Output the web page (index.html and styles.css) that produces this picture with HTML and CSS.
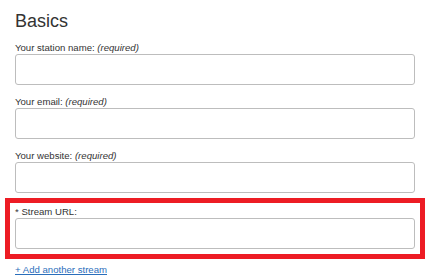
FILE: index.html
```html
<!DOCTYPE html>
<html lang="en">
<head>
    <meta charset="UTF-8">
    <meta name="viewport" content="width=device-width, initial-scale=1.0">
    <title>Basics</title>
    <link rel="stylesheet" href="styles.css">
</head>
<body>
    <form class="basics">
        <h1>Basics</h1>

        <div class="field">
            <label for="stationName">Your station name: <em>(required)</em></label>
            <input type="text" id="stationName" name="stationName">
        </div>

        <div class="field">
            <label for="email">Your email: <em>(required)</em></label>
            <input type="text" id="email" name="email">
        </div>

        <div class="field">
            <label for="website">Your website: <em>(required)</em></label>
            <input type="text" id="website" name="website">
        </div>

        <!-- highlighted stream block -->
        <div class="stream">
            <label for="streamUrl">* Stream URL:</label>
            <input type="text" id="streamUrl" name="streamUrl">
        </div>

        <a class="add-stream" href="#">+ Add another stream</a>
    </form>
</body>
</html>
```

FILE: styles.css
```css
body {
    font-family: "Liberation Sans", Arial, sans-serif;
    margin: 0;
    padding: 0 15px;
    background-color: #fff;
    color: #333;
}
h1 {
    font-size: 18px;
    font-weight: normal;
    line-height: 22px;
    margin: 10px 0 9px;
    color: #333;
}
label {
    display: block;
    font-size: 9.6px;
    line-height: 13px;
}
label em {
    font-style: italic;
}
input {
    display: block;
    box-sizing: border-box;
    width: 400px;
    height: 31px;
    margin: 0;
    padding: 4px 6px;
    border: 1px solid #bdbdbd;
    border-radius: 3px;
    font-size: 12px;
}
.field {
    margin-bottom: 10px;
}
.field:nth-of-type(3) {
    margin-bottom: 5px;
}
.stream {
    width: 400px;
    margin: 0 -10px;
    padding: 2px 5px 5px;
    border: 5px solid #ed1c24;
}
.add-stream {
    display: inline-block;
    font-size: 9.6px;
    line-height: 13px;
    color: #2a6ebb;
    text-decoration: underline;
}
```
